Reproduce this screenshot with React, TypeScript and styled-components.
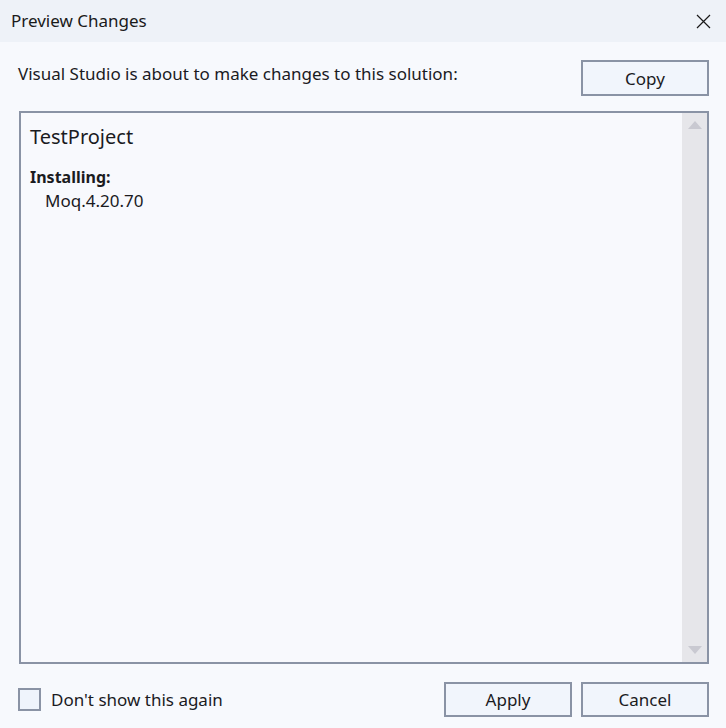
import React, { useState } from 'react';
import styled, { createGlobalStyle } from 'styled-components';

const Global = createGlobalStyle`
  html, body, #root {
    margin: 0;
    padding: 0;
    height: 100%;
  }
  body {
    font-family: "Segoe UI", "Noto Sans", "Liberation Sans", sans-serif;
    color: #1b1b1f;
    background: #f7f9fd;
  }
`;

const Window = styled.div`
  height: 100vh;
  display: flex;
  flex-direction: column;
  background: #f7f9fd;
`;

const TitleBar = styled.div`
  height: 42px;
  flex: none;
  display: flex;
  align-items: center;
  justify-content: space-between;
  padding: 0 8px 0 11px;
  background: #eef2f8;
`;

const TitleText = styled.div`
  font-size: 17px;
  color: #1a1a1a;
  margin-top: -2px;
`;

const CloseButton = styled.button`
  width: 30px;
  height: 30px;
  display: grid;
  place-items: center;
  border: none;
  background: transparent;
  padding: 0;
  cursor: pointer;
`;

const Body = styled.div`
  flex: 1;
  display: flex;
  flex-direction: column;
  gap: 15px;
  padding: 18px 17px 11px 19px;
  min-height: 0;
`;

const TopRow = styled.div`
  display: flex;
  align-items: center;
  justify-content: space-between;
  height: 36px;
`;

const Label = styled.div`
  font-size: 17px;
  margin-left: -1px;
  padding-bottom: 10px;
`;

const Button = styled.button<{ $h?: number }>`
  width: 128px;
  height: ${(p) => p.$h ?? 35}px;
  box-sizing: border-box;
  border: 2px solid #8a93a5;
  background: #f1f5fc;
  font-family: inherit;
  font-size: 17px;
  color: #1b1b1f;
  padding: 0;
  cursor: pointer;
`;

const ListBox = styled.div`
  flex: 1;
  display: flex;
  border: 2px solid #8a93a5;
  background: #f8f9fd;
  min-height: 0;
  margin-bottom: 3px;
`;

const ListContent = styled.div`
  flex: 1;
  padding: 10px 9px;
`;

const Project = styled.div`
  font-size: 20px;
  line-height: 28px;
  margin-bottom: 14px;
`;

const Heading = styled.div`
  font-size: 16px;
  font-weight: 700;
  line-height: 24px;
`;

const Item = styled.div`
  font-size: 17px;
  line-height: 24px;
  padding-left: 15px;
`;

const ScrollBar = styled.div`
  width: 25px;
  flex: none;
  background: #e6e6ea;
  display: flex;
  flex-direction: column;
  justify-content: space-between;
  align-items: center;
  padding: 8px 0;
`;

const BottomRow = styled.div`
  display: flex;
  align-items: center;
  height: 35px;
  gap: 9px;
`;

const CheckLabel = styled.label`
  display: flex;
  align-items: center;
  gap: 10px;
  font-size: 17px;
  margin-left: -1px;
  cursor: pointer;
`;

const Box = styled.span<{ $on: boolean }>`
  width: 23px;
  height: 23px;
  box-sizing: border-box;
  border: 2px solid #8a93a5;
  background: #eff4fc;
  display: grid;
  place-items: center;
`;

const Spacer = styled.div`
  flex: 1;
`;

function Arrow({ up }: { up?: boolean }) {
  return (
    <svg width="14" height="8" viewBox="0 0 14 8">
      <polygon points={up ? '7,0 14,8 0,8' : '0,0 14,0 7,8'} fill="#c9c9d1" />
    </svg>
  );
}

export default function App() {
  const [dontShow, setDontShow] = useState(false);

  return (
    <Window>
      <Global />
      <TitleBar>
        <TitleText>Preview Changes</TitleText>
        <CloseButton aria-label="Close">
          <svg width="15" height="15" viewBox="0 0 15 15">
            <path d="M1 1 L14 14 M14 1 L1 14" stroke="#1a1a1a" strokeWidth="1.2" />
          </svg>
        </CloseButton>
      </TitleBar>
      <Body>
        <TopRow>
          <Label>Visual Studio is about to make changes to this solution:</Label>
          <Button $h={36}>Copy</Button>
        </TopRow>
        <ListBox>
          <ListContent>
            <Project>TestProject</Project>
            <Heading>Installing:</Heading>
            <Item>Moq.4.20.70</Item>
          </ListContent>
          <ScrollBar>
            <Arrow up />
            <Arrow />
          </ScrollBar>
        </ListBox>
        <BottomRow>
          <CheckLabel onClick={() => setDontShow((v) => !v)}>
            <Box $on={dontShow}>
              {dontShow && (
                <svg width="14" height="12" viewBox="0 0 14 12">
                  <path d="M1 6 L5 10 L13 1" stroke="#1b1b1f" strokeWidth="1.6" fill="none" />
                </svg>
              )}
            </Box>
            Don't show this again
          </CheckLabel>
          <Spacer />
          <Button>Apply</Button>
          <Button>Cancel</Button>
        </BottomRow>
      </Body>
    </Window>
  );
}
